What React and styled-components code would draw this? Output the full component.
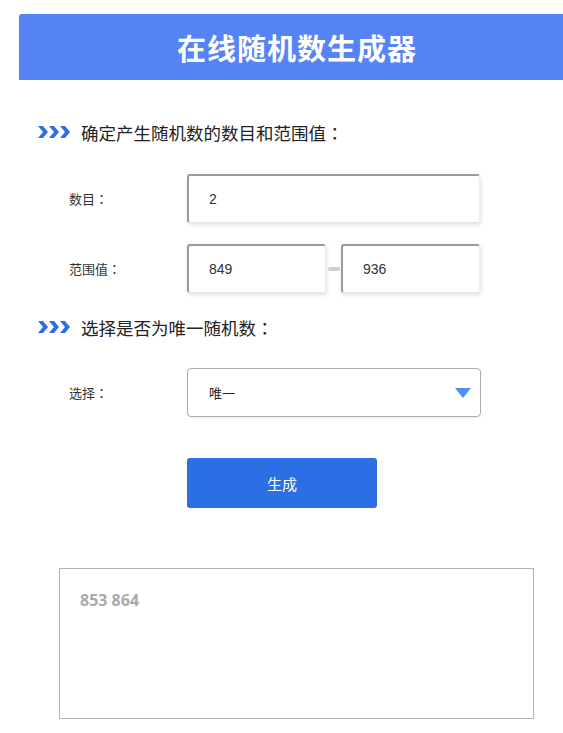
import React from "react";
import styled, { createGlobalStyle } from "styled-components";

const GlobalStyle = createGlobalStyle`
  html, body {
    margin: 0;
    padding: 0;
    background: #fff;
    overflow-x: hidden;
  }
  body {
    font-family: "Noto Sans CJK SC", "Liberation Sans", sans-serif;
    color: #333;
  }
`;

const Page = styled.div`
  width: 563px;
  padding-top: 14px;
  padding-bottom: 14px;
`;

const Banner = styled.h1`
  margin: 0 0 0 19px;
  width: 556px;
  height: 66px;
  background: #5683f6;
  border-radius: 3px 0 0 0;
  color: #fff;
  font-size: 29px;
  font-weight: 700;
  display: flex;
  align-items: center;
  justify-content: center;
  letter-spacing: 1px;
`;

const SectionTitle = styled.div`
  display: flex;
  align-items: center;
  gap: 11px;
  height: 24px;
  padding-left: 38px;
  margin-top: ${({ $top }) => $top}px;
  font-size: 17.5px;
  color: #222;
`;

/* full-width colon centred in its cell, as in the original font */
const Colon = styled.span`
  font-family: "Noto Sans CJK JP", sans-serif;
`;

const FormRow = styled.div`
  display: flex;
  align-items: center;
  height: 49px;
  margin-top: ${({ $top }) => $top}px;
`;

const Label = styled.div`
  width: 118px;
  padding-left: 69px;
  font-size: 13px;
  color: #333;
`;

const Field = styled.div`
  box-sizing: border-box;
  width: ${({ $w }) => $w}px;
  height: 49px;
  display: flex;
  align-items: center;
  padding-left: 20px;
  font-family: "Liberation Sans", "Noto Sans CJK SC", sans-serif;
  font-size: 14px;
  color: #333;
  background: #fff;
  border-top: 2px solid #9a9a9a;
  border-left: 2px solid #9a9a9a;
  border-right: 1px solid #eee;
  border-bottom: 1px solid #e6e6e6;
  border-radius: 3px;
  box-shadow: 1px 2px 4px rgba(0, 0, 0, 0.12);
`;

const Dash = styled.span`
  width: 12px;
  height: 4px;
  margin: 0 1.5px;
  border-radius: 2px;
  background: #cfcfcf;
`;

const Select = styled.div`
  box-sizing: border-box;
  width: 294px;
  height: 49px;
  display: flex;
  align-items: center;
  justify-content: space-between;
  padding: 0 9px 0 21px;
  border: 1px solid #ababab;
  border-radius: 4px;
  box-shadow: 0 1px 2px rgba(0, 0, 0, 0.08);
  font-size: 13px;
  color: #222;
`;

const Arrow = styled.span`
  width: 0;
  height: 0;
  border-left: 8px solid transparent;
  border-right: 8px solid transparent;
  border-top: 10px solid #4f8ef7;
`;

const ButtonRow = styled.div`
  padding-left: 187px;
  margin-top: 41px;
`;

const Button = styled.button`
  width: 190px;
  height: 50px;
  border: none;
  border-radius: 3px;
  background: #2c6ee3;
  color: #fff;
  font-family: "Noto Sans CJK SC", sans-serif;
  font-size: 15px;
`;

const Result = styled.div`
  box-sizing: border-box;
  margin: 60px 0 0 59px;
  width: 475px;
  height: 151px;
  border: 1px solid #b3b3b3;
  padding: 20px 20px;
  font-family: "Open Sans", "Liberation Sans", sans-serif;
  font-weight: 700;
  font-size: 16px;
  line-height: 22px;
  color: #aaa;
`;

const Chevrons = () => (
  <svg width="32" height="12" viewBox="0 0 32 12">
    {[0, 11, 22].map((x) => (
      <polygon
        key={x}
        points={`${x},0 ${x + 5},0 ${x + 10},6 ${x + 5},12 ${x},12 ${x + 5},6`}
        fill="#2c6ee3"
      />
    ))}
  </svg>
);

export default function App() {
  return (
    <Page>
      <GlobalStyle />
      <Banner>在线随机数生成器</Banner>

      <SectionTitle $top={40}>
        <Chevrons />
        <span>
          确定产生随机数的数目和范围值<Colon>：</Colon>
        </span>
      </SectionTitle>
      <FormRow $top={30}>
        <Label>
          数目<Colon>：</Colon>
        </Label>
        <Field $w={293}>2</Field>
      </FormRow>
      <FormRow $top={21}>
        <Label>
          范围值<Colon>：</Colon>
        </Label>
        <Field $w={139}>849</Field>
        <Dash />
        <Field $w={139}>936</Field>
      </FormRow>

      <SectionTitle $top={22}>
        <Chevrons />
        <span>
          选择是否为唯一随机数<Colon>：</Colon>
        </span>
      </SectionTitle>
      <FormRow $top={29}>
        <Label>
          选择<Colon>：</Colon>
        </Label>
        <Select>
          唯一
          <Arrow />
        </Select>
      </FormRow>

      <ButtonRow>
        <Button>生成</Button>
      </ButtonRow>

      <Result>853 864</Result>
    </Page>
  );
}
